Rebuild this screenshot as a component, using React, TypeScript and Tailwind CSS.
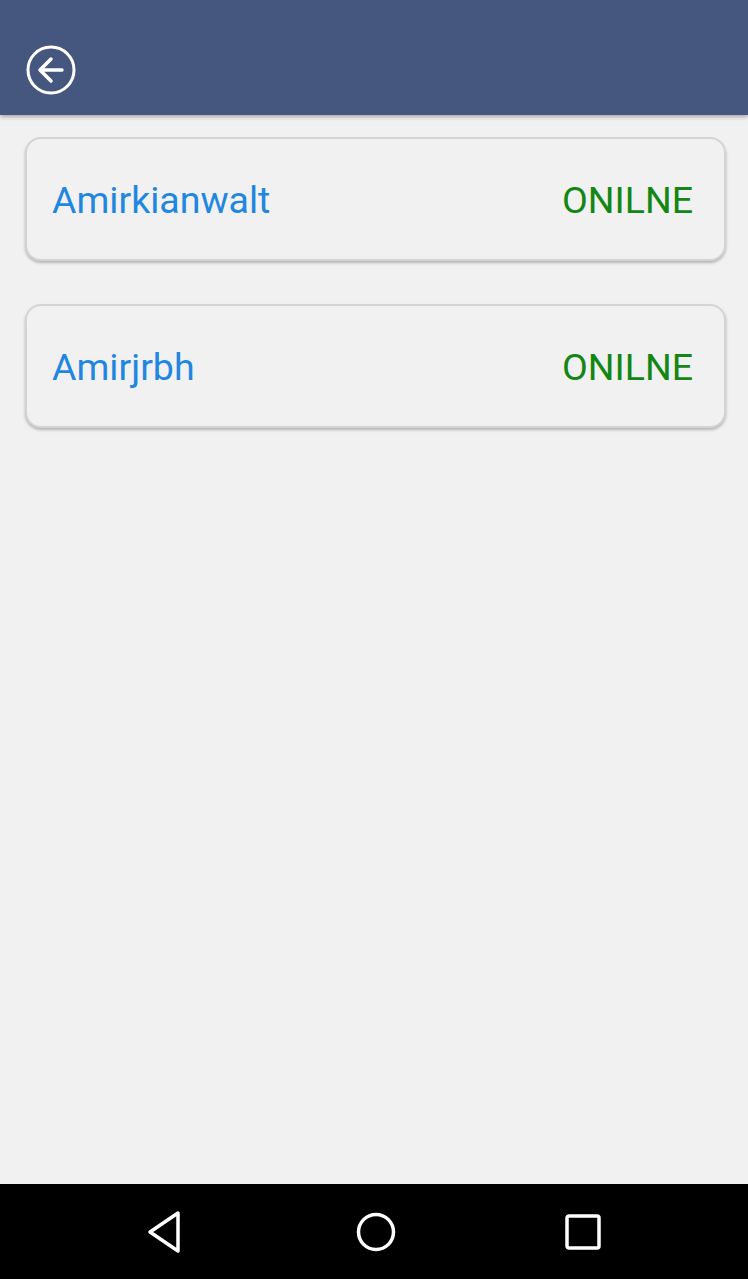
import React from "react";

function Card({ name }: { name: string }) {
  return (
    <div className="ml-[25px] mr-[22px] h-[124px] rounded-[16px] border-2 border-[#d4d4d4] bg-[#f1f1f1] shadow-[0_2px_3px_rgba(0,0,0,0.25)] flex items-center justify-between pl-[25px] pr-[31px] pt-[4px]">
      <span className="text-[37.5px] text-[#1f87e0] leading-none">{name}</span>
      <span className="text-[37.5px] text-[#138613] leading-none">ONILNE</span>
    </div>
  );
}

export default function App() {
  return (
    <div className="w-[748px] h-[1279px] flex flex-col bg-[#f1f1f1]" style={{ fontFamily: "Roboto, 'Noto Sans', sans-serif" }}>
      <div className="h-[115px] bg-[#46577f] flex items-center pl-[26px] pt-[24px] shadow-[0_2px_4px_rgba(0,0,0,0.3)] relative z-10">
        <svg width="50" height="50" viewBox="0 0 50 50">
          <circle cx="25" cy="25" r="23" fill="none" stroke="white" strokeWidth="3" />
          <path d="M25 14 L14 25 L25 36 M14 25 H36" fill="none" stroke="white" strokeWidth="3.5" strokeLinecap="round" strokeLinejoin="round" />
        </svg>
      </div>
      <div className="flex-1 flex flex-col gap-[43px] pt-[22px]">
        <Card name="Amirkianwalt" />
        <Card name="Amirjrbh" />
      </div>
      <div className="h-[95px] bg-black flex items-center justify-between pl-[147px] pr-[147px]">
        <svg width="34" height="42" viewBox="0 0 34 42">
          <path d="M31 2 L3 21 L31 40 Z" fill="none" stroke="white" strokeWidth="3.5" strokeLinejoin="round" />
        </svg>
        <svg width="40" height="40" viewBox="0 0 40 40" className="ml-[6px]">
          <circle cx="20" cy="20" r="17.5" fill="none" stroke="white" strokeWidth="3.5" />
        </svg>
        <svg width="36" height="36" viewBox="0 0 36 36">
          <rect x="2" y="2" width="32" height="32" rx="2" fill="none" stroke="white" strokeWidth="3.5" />
        </svg>
      </div>
    </div>
  );
}
